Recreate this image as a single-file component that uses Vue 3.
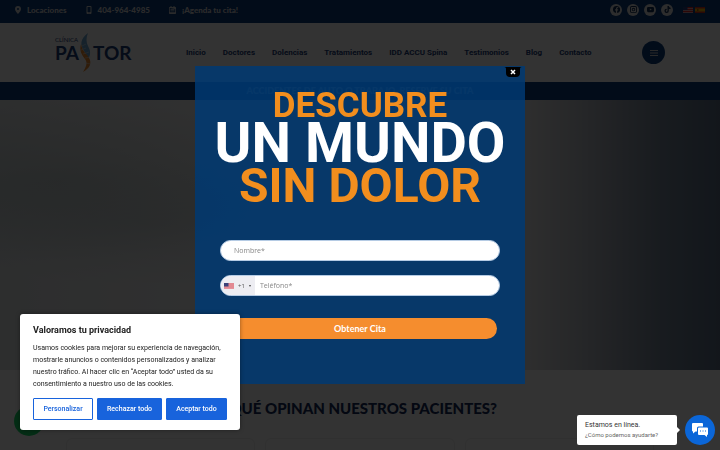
<template>
  <div class="page">
    <header>
      <div class="topbar">
        <ul class="contact-list">
          <li>
            <a href="#locaciones">
              <svg width="6" height="8" viewBox="0 0 12 16" aria-hidden="true">
                <path fill-rule="evenodd" d="M6 0a6 6 0 0 1 6 6c0 4-6 10-6 10S0 10 0 6a6 6 0 0 1 6-6Zm0 4a2 2 0 1 0 0 4 2 2 0 0 0 0-4Z" />
              </svg>
              Locaciones
            </a>
          </li>
          <li>
            <a href="tel:4049644985">
              <svg width="6" height="8" viewBox="0 0 12 16" aria-hidden="true">
                <path fill-rule="evenodd" d="M3 0h6a2 2 0 0 1 2 2v12a2 2 0 0 1-2 2H3a2 2 0 0 1-2-2V2a2 2 0 0 1 2-2Zm0 2v10h6V2Zm2 11v1.500h2V13Z" />
              </svg>
              404-964-4985
            </a>
          </li>
          <li>
            <a href="#cita">
              <svg width="7" height="8" viewBox="0 0 14 16" aria-hidden="true">
                <path fill-rule="evenodd" d="M3 0h2v2h4V0h2v2h1.500a1.500 1.500 0 0 1 1.500 1.500V14.500a1.500 1.500 0 0 1-1.500 1.500H1.500A1.500 1.500 0 0 1 0 14.500V3.500A1.500 1.500 0 0 1 1.500 2H3Zm-1.500 4v8.500h11V6Zm1.500 2h8v1.500H3Zm0 3h8v1.500H3Z" />
              </svg>
              ¡Agenda tu cita!
            </a>
          </li>
        </ul>
        <div class="topbar-right">
          <a v-for="item in socials" :key="item.name" href="#" class="social" :aria-label="item.name">
            <svg width="7" height="7" viewBox="0 0 16 16" aria-hidden="true">
              <path fill-rule="evenodd" :d="item.path" />
            </svg>
          </a>
          <a href="#en" class="flag first" aria-label="English">
            <svg width="10" height="6" viewBox="0 0 20 12">
              <path fill="#d8a0a8" d="M0 0h20v12H0z" />
              <path stroke="#e02626" stroke-width="2" d="M0 1h20M0 5h20M0 9h20" />
              <path fill="#263d80" d="M0 0h9v6H0z" />
            </svg>
          </a>
          <a href="#es" class="flag" aria-label="Español">
            <svg width="10" height="6" viewBox="0 0 20 12">
              <path fill="#d03020" d="M0 0h20v12H0z" />
              <path fill="#f5b800" d="M0 3h20v6H0z" />
              <path fill="#a85218" d="M4 4h3v4H4z" />
            </svg>
          </a>
        </div>
      </div>

      <div class="navbar">
        <a href="#" class="logo" aria-label="Clínica Pastor">
          <span class="logo-left"><small>CLÍNICA</small><b>PA</b></span>
          <svg width="14" height="40" viewBox="0 0 14 40" aria-hidden="true">
            <path fill="#6ea8d4" d="M9 0C1 6 1 12 5 18c2 3 4 6 3 10 5-7 3-11 1-15C7 9 7 5 9 0Z" />
            <path fill="#ed8b30" d="M2 11c-2 7 1 11 4 15s1 8-2 13c7-4 9-9 6-14-2-4-7-7-8-14Z" />
            <path stroke="#e8e8e8" stroke-width=".5" d="m2 17 5-2M4 21l6-2M6 25l6-1M6 30l6 1M3 13l4-2" />
          </svg>
          <b>TOR</b>
        </a>
        <nav>
          <a v-for="link in links" :key="link" href="#">{{ link }}</a>
        </nav>
        <button class="menu-btn" aria-label="Menú">
          <svg width="8" height="8" viewBox="0 0 8 8" aria-hidden="true">
            <path stroke="#ccc" d="M0 1.500h8M0 4h8M0 6.500h8" />
          </svg>
        </button>
      </div>
      <p class="notice">ACCIDENTES DE AUTO O TRABAJO, RESERVE SU CITA</p>
    </header>

    <section class="hero"></section>

    <section class="reviews">
      <h2>¿QUÉ OPINAN NUESTROS PACIENTES?</h2>
      <div class="cards">
        <div v-for="n in 3" :key="n" class="card"></div>
      </div>
    </section>
    <a href="#whatsapp" class="whatsapp" aria-label="WhatsApp"></a>
  </div>

  <div class="overlay">
    <div class="popup" role="dialog" aria-label="Descubre un mundo sin dolor">
      <button class="close" aria-label="Cerrar">
        <svg width="18" height="10" viewBox="0 0 18 10" aria-hidden="true">
          <path d="M0 0h18c-2 0-2 1-2 3v3q0 4-4 4H6Q2 10 2 6V3C2 1 2 0 0 0Z" />
          <path stroke="#fff" stroke-width="1.500" d="m7 3 4 4M11 3 7 7" />
        </svg>
      </button>
      <h1>
        <span class="line-top">DESCUBRE</span>
        <span class="line-mid">UN MUNDO</span>
        <span class="line-end">SIN DOLOR</span>
      </h1>
      <form @submit.prevent>
        <input v-model="name" class="field name" type="text" placeholder="Nombre*" aria-label="Nombre" />
        <div class="field phone">
          <button type="button" class="prefix" aria-label="Código de país">
            <svg width="10" height="6" viewBox="0 0 20 12" aria-hidden="true">
              <path fill="#f0c4ca" d="M0 0h20v12H0z" />
              <path stroke="#d0414f" stroke-width="1" d="M0 .5h20M0 2.500h20M0 4.500h20M0 6.500h20M0 8.500h20M0 10.500h20" />
              <path fill="#3a4279" d="M0 0h9v7H0z" />
            </svg>
            <span>+1</span>
            <i></i>
          </button>
          <input v-model="phone" type="tel" placeholder="Teléfono*" aria-label="Teléfono" />
        </div>
        <button class="submit" type="submit">Obtener Cita</button>
      </form>
    </div>
  </div>

  <aside class="cookies">
    <h3>Valoramos tu privacidad</h3>
    <p>
      Usamos cookies para mejorar su experiencia de navegación, mostrarle anuncios o contenidos
      personalizados y analizar nuestro tráfico. Al hacer clic en “Aceptar todo” usted da su
      consentimiento a nuestro uso de las cookies.
    </p>
    <div class="cookie-actions">
      <button class="outline">Personalizar</button>
      <button>Rechazar todo</button>
      <button>Aceptar todo</button>
    </div>
  </aside>

  <div class="chat">
    <div class="chat-text">
      <strong>Estamos en línea.</strong>
      <span>¿Cómo podemos ayudarte?</span>
    </div>
    <button class="chat-btn" aria-label="Abrir chat">
      <svg width="16" height="14" viewBox="0 0 32 28" aria-hidden="true">
        <path fill="#fff" d="M2 0h18q2 0 2 2v5H13q-3 0-3 3v7H7l-5 4v-4q-2 0-2-2V2q0-2 2-2Z" />
        <path fill="#fff" d="M14 9h16q2 0 2 2v11q0 2-2 2v4l-5-4H14q-2 0-2-2V11q0-2 2-2Z" />
        <path fill="#0b66d8" d="M16 15h2v2h-2zM21 15h2v2h-2zM26 15h2v2h-2z" />
      </svg>
    </button>
  </div>
</template>

<script setup>
import { ref } from 'vue';

const name = ref('');
const phone = ref('');

const links = [
  'Inicio',
  'Doctores',
  'Dolencias',
  'Tratamientos',
  'IDD ACCU Spina',
  'Testimonios',
  'Blog',
  'Contacto'
];

const socials = [
  { name: 'Facebook', path: 'M8 0a8 8 0 0 1 1.500 15.900V10h2l.5-2.500H9.500V6q0-1.200 1.300-1.200H12V2.600Q6.700 1.500 6.700 6v1.500h-2V10h2v5.900A8 8 0 0 1 8 0Z' },
  { name: 'Instagram', path: 'M4 0h8a4 4 0 0 1 4 4v8a4 4 0 0 1-4 4H4a4 4 0 0 1-4-4V4a4 4 0 0 1 4-4Zm0 2a2 2 0 0 0-2 2v8a2 2 0 0 0 2 2h8a2 2 0 0 0 2-2V4a2 2 0 0 0-2-2Zm4 2a4 4 0 1 1 0 8 4 4 0 0 1 0-8Zm0 2a2 2 0 1 0 0 4 2 2 0 0 0 0-4Z' },
  { name: 'YouTube', path: 'M3 2h10q3 0 3 3v6q0 3-3 3H3q-3 0-3-3V5q0-3 3-3Zm3.500 3.500v5L11 8Z' },
  { name: 'TikTok', path: 'M8 0h3q0 4 4 4v3q-2 0-4-1v5a5 5 0 1 1-5-5v3a2 2 0 1 0 2 2Z' }
];
</script>

<style>
body {
  font-family: Roboto, "Liberation Sans", sans-serif;
  background: #fff;
}
</style>

<style scoped>
* {
  box-sizing: border-box;
}

a {
  color: inherit;
  text-decoration: none;
}

button {
  font-family: inherit;
  border: 0;
  padding: 0;
  cursor: pointer;
}

svg {
  display: block;
  fill: currentColor;
}

.page {
  position: relative;
  display: flex;
  flex-direction: column;
  height: 100vh;
  overflow: hidden;
}

header {
  flex: none;
}

.topbar {
  display: flex;
  justify-content: space-between;
  padding: 0 15px;
  height: 23px;
  background: #0a3c7d;
  color: #d8d8d8;
}

.contact-list {
  display: flex;
  gap: 19px;
  margin: 0;
  padding: 0;
  list-style: none;
  font: 900 8px/20px Lato, sans-serif;
}

.contact-list a {
  display: flex;
  align-items: center;
  gap: 6px;
}

.topbar-right {
  display: flex;
  align-items: center;
  gap: 5px;
  height: 19px;
}

.social {
  display: grid;
  place-items: center;
  width: 12px;
  height: 12px;
  border-radius: 50%;
  background: #dedede;
  color: #0a2850;
}

.flag.first {
  margin-left: 5px;
}

.flag + .flag {
  margin-left: -3px;
}

.navbar {
  display: flex;
  align-items: center;
  padding: 0 55px;
  height: 59px;
  color: #1c3c78;
}

.logo {
  display: flex;
  align-items: center;
  width: 131px;
  font: 19px/19px Lato, sans-serif;
}

.logo b {
  font-weight: 700;
}

.logo-left {
  display: flex;
  flex-direction: column;
  padding-bottom: 7px;
}

.logo-left small {
  font-size: 6px;
  line-height: 7px;
}

nav {
  display: flex;
  gap: 17px;
  font-size: 8px;
  font-weight: 700;
  white-space: nowrap;
}

.menu-btn {
  display: grid;
  place-items: center;
  width: 23px;
  height: 23px;
  margin-left: auto;
  border-radius: 50%;
  background: #0a3c7d;
}

.notice {
  margin: 0;
  height: 18px;
  background: #0a3c7d;
  color: #d8d8d8;
  text-align: center;
  font: 900 9px/18px Lato, sans-serif;
}

.hero {
  flex: none;
  height: 60%;
  background:
    radial-gradient(ellipse at 8% 30%, rgba(90, 120, 115, 0.2), transparent 30%),
    radial-gradient(ellipse at 20% 45%, rgba(110, 135, 145, 0.15), transparent 30%),
    linear-gradient(90deg, #e0e4e6 0%, #f2f2f2 35%, #e6e6e6 73%, #b5bac3 82%, #7c8b9d 91%, #5d7088 100%);
}

.reviews {
  flex: none;
}

.reviews h2 {
  margin: 28px 0 20px;
  text-align: center;
  color: #142c5a;
  font: 900 15px/20px Lato, sans-serif;
}

.cards {
  display: grid;
  grid-template-columns: repeat(3, 1fr);
  gap: 10px;
  padding: 0 66px;
}

.card {
  height: 60px;
  border: 1px solid #eee;
  border-radius: 6px;
}

.whatsapp {
  position: absolute;
  left: 14px;
  bottom: 14px;
  width: 30px;
  height: 30px;
  border-radius: 50%;
  background: #18e06a;
}

.overlay {
  position: fixed;
  inset: 0;
  display: grid;
  place-items: center;
  background: rgba(0, 0, 0, 0.8);
}

.popup {
  position: relative;
  width: 330px;
  padding: 23px 25px 45px;
  background: rgba(0, 58, 115, 0.85);
}

.close {
  position: absolute;
  top: 1px;
  right: 3px;
  background: none;
  color: #000;
}

h1 {
  display: flex;
  flex-direction: column;
  align-items: center;
  margin: 0 0 32px;
  color: #f28e1e;
  font-weight: 700;
  white-space: nowrap;
}

.line-top {
  font-size: 35px;
  line-height: 33px;
}

.line-mid {
  font-size: 56px;
  line-height: 42px;
  color: #fff;
}

.line-end {
  font-size: 48px;
  line-height: 44px;
}

form {
  display: flex;
  flex-direction: column;
  gap: 14px;
}

.field {
  height: 21px;
  border: 1px solid #b5cbe4;
  border-radius: 11px;
  background: #fff;
  overflow: hidden;
}

input {
  font: 7px "Open Sans", sans-serif;
  color: #444;
}

input::placeholder {
  color: #888;
  opacity: 1;
}

.name {
  padding: 0 13px;
}

.phone {
  display: flex;
}

.phone input {
  flex: 1;
  min-width: 0;
  padding: 0 5px;
  border: 0;
  background: none;
}

.prefix {
  display: flex;
  align-items: center;
  gap: 4px;
  width: 34px;
  padding-left: 3px;
  background: #ededf2;
  color: #555;
  font: 6px "Open Sans", sans-serif;
}

.prefix i {
  border: 1px solid transparent;
  border-top: 2px solid #444;
  border-bottom: 0;
}

.submit {
  height: 21px;
  margin: 8px 3px 0;
  border-radius: 11px;
  background: #f58d2e;
  color: #fff;
  font: 700 9px Lato, sans-serif;
}

.cookies {
  position: fixed;
  left: 20px;
  bottom: 20px;
  width: 220px;
  padding: 10px 13px;
  border-radius: 3px;
  background: #fff;
  color: #212121;
  box-shadow: 0 0 4px rgba(0, 0, 0, 0.4);
}

.cookies h3 {
  margin: 0 0 5px;
  font-size: 9px;
  line-height: 13px;
}

.cookies p {
  margin: 0 0 8px;
  font-size: 7px;
  line-height: 12px;
}

.cookie-actions {
  display: grid;
  grid-template-columns: 60px 65px 61px;
  gap: 4px;
}

.cookie-actions button {
  height: 22px;
  border: 1px solid #1863dc;
  border-radius: 1px;
  background: #1863dc;
  color: #fff;
  font-size: 7px;
  font-weight: 500;
}

.cookie-actions .outline {
  background: #fff;
  color: #1863dc;
}

.chat {
  position: fixed;
  right: 5px;
  bottom: 5px;
  display: flex;
  align-items: center;
  gap: 8px;
}

.chat-text {
  position: relative;
  display: flex;
  flex-direction: column;
  width: 100px;
  padding: 5px 8px;
  border-radius: 2px;
  background: #fff;
  color: #333;
  font-size: 7px;
  line-height: 10px;
  white-space: nowrap;
}

.chat-text::after {
  content: "";
  position: absolute;
  top: 12px;
  left: 100%;
  border: 3px solid transparent;
  border-left-color: #fff;
}

.chat-text strong {
  font-weight: 400;
}

.chat-text span {
  color: #666;
  font-size: 6px;
}

.chat-btn {
  display: grid;
  place-items: center;
  width: 30px;
  height: 30px;
  border-radius: 50%;
  background: #0b66d8;
}
</style>
